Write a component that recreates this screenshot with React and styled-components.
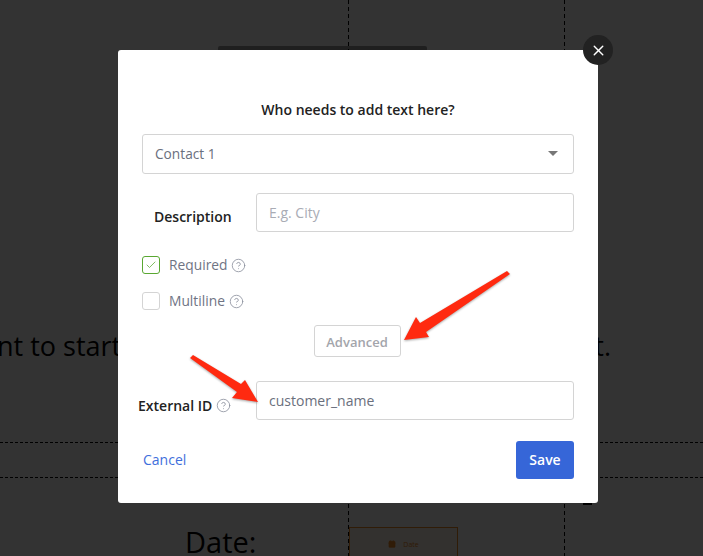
import styled, { createGlobalStyle } from "styled-components"
import { Check, CircleHelp, X, Calendar } from "lucide-react"

const Global = createGlobalStyle`
    html, body {
        margin: 0;
        padding: 0;
    }
    * {
        box-sizing: border-box;
    }
    body {
        font-family: "Open Sans", sans-serif;
    }
`

export default function App() {
    return (
        <Page>
            <Global />
            <Sheet>
                <TopArea>
                    <HiddenBlock />
                    <SheetText>
                        <span>nt to start</span>
                        <span>t.</span>
                    </SheetText>
                </TopArea>
                <BandRow />
                <BottomArea>
                    <DateLabel>Date:</DateLabel>
                    <DateField>
                        <Calendar size={8} color="#f08a24" fill="#f08a24" />
                        <span>Date</span>
                    </DateField>
                </BottomArea>
            </Sheet>

            <Overlay>
                <ModalEdge />
                <Modal>
                    <CloseButton>
                        <X size={17} strokeWidth={2} />
                    </CloseButton>
                    <Title>Who needs to add text here?</Title>
                    <SelectBox>
                        Contact 1
                        <Caret />
                    </SelectBox>
                    <FieldRow $top={19}>
                        <FieldLabel $left={12}>Description</FieldLabel>
                        <TextBox $muted>E.g. City</TextBox>
                    </FieldRow>
                    <CheckRow $top={24}>
                        <CheckBox $checked>
                            <Check size={12} strokeWidth={1.5} color="#5aa832" />
                        </CheckBox>
                        <CheckText>Required</CheckText>
                        <CircleHelp size={15} strokeWidth={1.3} color="#8a8f9c" />
                    </CheckRow>
                    <CheckRow $top={18}>
                        <CheckBox />
                        <CheckText>Multiline</CheckText>
                        <CircleHelp size={15} strokeWidth={1.3} color="#8a8f9c" />
                    </CheckRow>
                    <AdvancedRow>
                        <AdvancedButton>Advanced</AdvancedButton>
                    </AdvancedRow>
                    <FieldRow $top={24}>
                        <FieldLabel $left={-4} $drop={10}>
                            External ID
                            <CircleHelp size={15} strokeWidth={1.3} color="#8a8f9c" />
                        </FieldLabel>
                        <TextBox>customer_name</TextBox>
                    </FieldRow>
                    <Footer>
                        <CancelLink>Cancel</CancelLink>
                        <SaveButton>Save</SaveButton>
                    </Footer>
                </Modal>
                <Arrows viewBox="0 0 703 556" width="703" height="556">
                    <path d="M507 271 L510 274 L426 332 L429 337 L404 340 L416 317 L420 323 Z" fill="#ff2a10" />
                    <path d="M190 358 L193 355 L241 384 L245 380 L258 402 L232 398 L237 392 Z" fill="#ff2a10" />
                </Arrows>
            </Overlay>
        </Page>
    )
}

const Page = styled.div`
    position: relative;
    width: 703px;
    height: 556px;
    overflow: hidden;
    background: #fff;
`
const Sheet = styled.div`
    height: 556px;
    display: flex;
    flex-direction: column;
    background-image:
        repeating-linear-gradient(to bottom, #000 0 4px, transparent 4px 7px),
        repeating-linear-gradient(to bottom, #000 0 4px, transparent 4px 7px);
    background-size: 1px 100%, 1px 100%;
    background-position: 348px 0, 564px 0;
    background-repeat: no-repeat;
`
const TopArea = styled.div`
    flex: none;
    height: 442px;
    position: relative;
    padding-top: 326px;
`
const HiddenBlock = styled.div`
    position: absolute;
    top: 46px;
    left: 218px;
    width: 209px;
    height: 20px;
    background: #000;
    border-radius: 2px;
    opacity: 0.4;
`
const SheetText = styled.div`
    display: flex;
    justify-content: space-between;
    margin-left: -3px;
    padding-right: 92px;
    font-size: 27px;
    line-height: 40px;
    color: #000;
    white-space: nowrap;
`
const BandRow = styled.div`
    flex: none;
    height: 36px;
    border-top: 1px dashed #000;
    border-bottom: 1px dashed #000;
`
const BottomArea = styled.div`
    flex: 1;
    min-height: 0;
    display: flex;
    padding-top: 49px;
    padding-left: 185px;
`
const DateLabel = styled.div`
    width: 164px;
    height: 29px;
    font-size: 29px;
    line-height: 30px;
    color: #000;
`
const DateField = styled.div`
    flex: none;
    width: 109px;
    height: 60px;
    border: 1px solid #f08a24;
    background: #fdf3e8;
    display: flex;
    align-items: flex-start;
    justify-content: center;
    gap: 7px;
    padding-top: 12px;
    font-size: 7px;
    line-height: 9px;
    color: #f08a24;
`
const Overlay = styled.div`
    position: absolute;
    inset: 0;
    background: rgba(0, 0, 0, 0.8);
`
const ModalEdge = styled.div`
    position: absolute;
    top: 502px;
    left: 583px;
    width: 9px;
    height: 3px;
    background: #000;
`
const Modal = styled.div`
    position: absolute;
    top: 50px;
    left: 118px;
    width: 480px;
    height: 453px;
    padding: 50px 24px 0;
    background: #fff;
    border-radius: 3px;
    display: flex;
    flex-direction: column;
`
const CloseButton = styled.div`
    position: absolute;
    top: -15px;
    right: -15px;
    width: 30px;
    height: 30px;
    border-radius: 50%;
    background: #222;
    color: #fff;
    display: flex;
    align-items: center;
    justify-content: center;
`
const Title = styled.div`
    height: 20px;
    font-size: 14px;
    line-height: 20px;
    font-weight: 600;
    text-align: center;
    color: #222;
`
const SelectBox = styled.div`
    position: relative;
    margin-top: 14px;
    height: 40px;
    padding-left: 12px;
    border: 1px solid #d4d4d4;
    border-radius: 3px;
    font-size: 13.7px;
    line-height: 38px;
    color: #6a6f7d;
`
const Caret = styled.span`
    position: absolute;
    top: 16px;
    right: 15px;
    border-left: 5px solid transparent;
    border-right: 5px solid transparent;
    border-top: 5px solid #777;
`
const FieldRow = styled.div`
    margin-top: ${(p) => p.$top}px;
    display: flex;
    align-items: center;
`
const FieldLabel = styled.div`
    width: 114px;
    margin-left: ${(p) => p.$left}px;
    margin-right: ${(p) => -p.$left}px;
    padding-top: ${(p) => p.$drop || 8}px;
    display: flex;
    align-items: center;
    gap: 4px;
    font-size: 14px;
    line-height: 20px;
    font-weight: 600;
    color: #222;
`
const TextBox = styled.div`
    flex: 1;
    height: 39px;
    padding-left: 12px;
    border: 1px solid #d4d4d4;
    border-radius: 3px;
    font-size: 14px;
    line-height: 37px;
    color: ${(p) => (p.$muted ? "#a9acb5" : "#6a6f7d")};
`
const CheckRow = styled.div`
    margin-top: ${(p) => p.$top}px;
    height: 18px;
    display: flex;
    align-items: center;
    gap: 4px;
    font-size: 13.8px;
    color: #6f7484;
`
const CheckText = styled.span`
    line-height: 18px;
    margin-top: -1px;
`
const CheckBox = styled.div`
    width: 18px;
    height: 18px;
    margin-right: 5px;
    border: 1px solid ${(p) => (p.$checked ? "#5aa832" : "#d4d4d4")};
    border-radius: 3px;
    display: flex;
    align-items: center;
    justify-content: center;
`
const AdvancedRow = styled.div`
    margin-top: 15px;
    display: flex;
    justify-content: center;
    padding-right: 2px;
`
const AdvancedButton = styled.div`
    width: 87px;
    height: 32px;
    border: 1px solid #d4d4d4;
    border-radius: 3px;
    font-size: 13px;
    font-weight: 600;
    line-height: 32px;
    text-align: center;
    color: #a3a5ab;
`
const Footer = styled.div`
    margin-top: 21px;
    display: flex;
    align-items: center;
    justify-content: space-between;
`
const CancelLink = styled.div`
    margin-left: 1px;
    margin-top: -2px;
    font-size: 14px;
    color: #3f6fdc;
`
const SaveButton = styled.div`
    width: 58px;
    height: 38px;
    border-radius: 3px;
    background: #3666d8;
    color: #fff;
    font-size: 14px;
    font-weight: 600;
    line-height: 38px;
    text-align: center;
`
const Arrows = styled.svg`
    position: absolute;
    top: 0;
    left: 0;
    filter: drop-shadow(0 1px 1px rgba(0, 0, 0, 0.35));
`
